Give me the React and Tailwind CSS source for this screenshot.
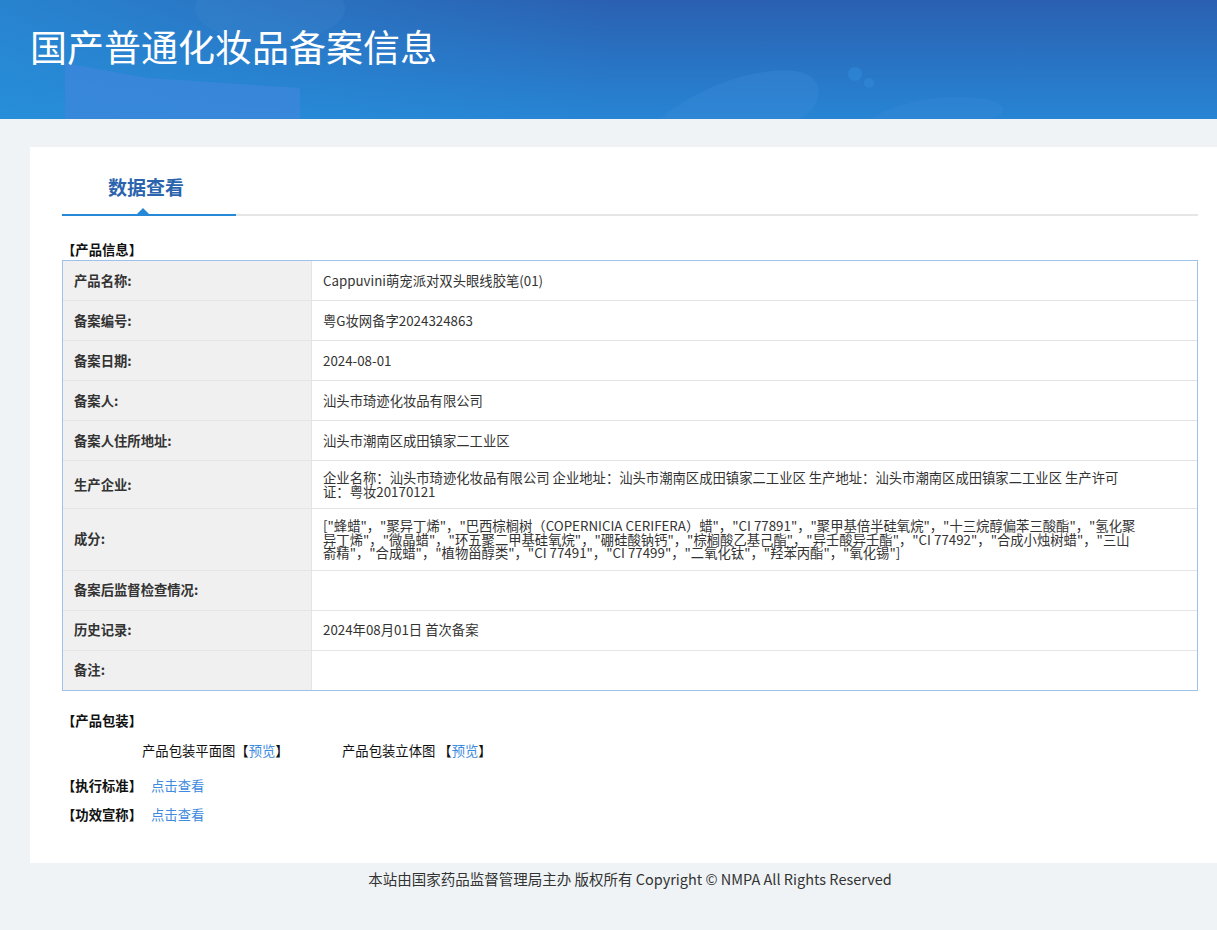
import React from 'react';

const font = { fontFamily: '"Noto Sans CJK SC", "Noto Sans", sans-serif' };

const rows = [
  { label: '产品名称:', value: 'Cappuvini萌宠派对双头眼线胶笔(01)' },
  { label: '备案编号:', value: '粤G妆网备字2024324863' },
  { label: '备案日期:', value: '2024-08-01' },
  { label: '备案人:', value: '汕头市琦迹化妆品有限公司' },
  { label: '备案人住所地址:', value: '汕头市潮南区成田镇家二工业区' },
  {
    label: '生产企业:',
    value:
      '企业名称：汕头市琦迹化妆品有限公司 企业地址：汕头市潮南区成田镇家二工业区 生产地址：汕头市潮南区成田镇家二工业区 生产许可证：粤妆20170121',
  },
  {
    label: '成分:',
    value:
      '["蜂蜡"，"聚异丁烯"，"巴西棕榈树（COPERNICIA CERIFERA）蜡"，"CI 77891"，"聚甲基倍半硅氧烷"，"十三烷醇偏苯三酸酯"，"氢化聚异丁烯"，"微晶蜡"，"环五聚二甲基硅氧烷"，"硼硅酸钠钙"，"棕榈酸乙基己酯"，"异壬酸异壬酯"，"CI 77492"，"合成小烛树蜡"，"三山嵛精"，"合成蜡"，"植物甾醇类"，"CI 77491"，"CI 77499"，"二氧化钛"，"羟苯丙酯"，"氧化锡"]',
  },
  { label: '备案后监督检查情况:', value: '' },
  { label: '历史记录:', value: '2024年08月01日 首次备案' },
  { label: '备注:', value: '' },
];

// soft shapes painted over the banner gradient
const BannerArt = () => (
  <svg className="absolute inset-0 h-full w-full" viewBox="0 0 1217 119" preserveAspectRatio="none">
    <defs>
      <linearGradient id="sky" x1="0" y1="0" x2="0" y2="1">
        <stop offset="0" stopColor="#2b60b1" />
        <stop offset="1" stopColor="#2785d4" />
      </linearGradient>
      <linearGradient id="leftGlow" x1="0" y1="0" x2="1" y2="0">
        <stop offset="0" stopColor="#2792dc" stopOpacity="0.7" />
        <stop offset="0.5" stopColor="#2792dc" stopOpacity="0" />
      </linearGradient>
    </defs>
    <rect width="1217" height="119" fill="url(#sky)" />
    <rect width="1217" height="119" fill="url(#leftGlow)" />
    <ellipse cx="270" cy="8" rx="75" ry="34" fill="#4a8ad2" opacity="0.2" />
    <polygon points="65,63 148,78 300,88 300,119 65,119" fill="#3f86dc" opacity="0.7" />
    <path d="M660 119 C700 85 760 65 800 72 C825 78 825 105 800 119 Z" fill="#3a8ad6" opacity="0.4" />
    <path d="M870 119 C900 100 950 92 990 100 C1010 106 1005 115 990 119 Z" fill="#3a8ad6" opacity="0.3" />
    <circle cx="855" cy="74" r="7" fill="#2f86d6" opacity="0.7" />
    <circle cx="869" cy="83" r="5" fill="#2f86d6" opacity="0.7" />
  </svg>
);

export default function App() {
  return (
    <div className="min-h-screen w-full overflow-hidden bg-[#eff3f6] text-[#333]" style={font}>
      {/* Banner */}
      <div className="relative h-[119px] overflow-hidden">
        <BannerArt />
        <h1 className="relative pl-[30px] pt-[22px] text-[37px] leading-[48px] font-normal text-white">
          国产普通化妆品备案信息
        </h1>
      </div>

      <div className="ml-[30px] w-[1200px]">
        {/* Content panel */}
        <div className="mt-[28px] bg-white px-8 pb-[40px]">
          <div className="border-b-2 border-[#e6e6e6] pt-[28px]">
            <div className="relative -mb-[2px] w-[174px] border-b-2 border-[#2589d8] pb-[14px] pl-[46px]">
              <span className="text-[19px] font-bold leading-[24px] text-[#2b64ad]">数据查看</span>
              <span className="absolute bottom-0 left-[75px] h-0 w-0 border-x-[6px] border-b-[6px] border-x-transparent border-b-[#2589d8]" />
            </div>
          </div>

          <div className="mt-[25px] text-[13.33px] font-bold leading-[18px] text-[#111]">【产品信息】</div>

          <div className="mt-px border border-[#9fc2ec] text-[13.33px]">
            {rows.map((r, i) => (
              <div key={i} className="flex border-b border-[#e4e4e4] last:border-b-0">
                <div className="flex w-[249px] shrink-0 items-center border-r border-[#e4e4e4] bg-[#f0f0f0] px-[11px] font-bold">
                  {r.label}
                </div>
                <div className="flex min-h-[39px] flex-1 items-center py-[10px] pl-[11px] pr-[55px] leading-[13.5px]">
                  {r.value}
                </div>
              </div>
            ))}
          </div>

          {/* Packaging and links */}
          <div className="mt-[21px] text-[13.33px] font-bold leading-[17px] text-[#111]">【产品包装】</div>
          <div className="mt-[13px] flex pl-[80px] text-[13.33px] leading-[17px] text-[#111]">
            <div className="w-[200px]">
              产品包装平面图【<a className="text-[#3d8ade]">预览</a>】
            </div>
            <div>
              产品包装立体图 【<a className="text-[#3d8ade]">预览</a>】
            </div>
          </div>
          <div className="mt-[18px] flex text-[13.33px] leading-[17px]">
            <span className="w-[89px] font-bold text-[#111]">【执行标准】</span>
            <a className="text-[#3d8ade]">点击查看</a>
          </div>
          <div className="mt-[12px] flex text-[13.33px] leading-[17px]">
            <span className="w-[89px] font-bold text-[#111]">【功效宣称】</span>
            <a className="text-[#3d8ade]">点击查看</a>
          </div>
        </div>

        {/* Footer */}
        <div className="py-[7px] text-center text-[14.5px] leading-[18px] text-[#333]">
          本站由国家药品监督管理局主办 版权所有 Copyright © NMPA All Rights Reserved
        </div>
      </div>
    </div>
  );
}
